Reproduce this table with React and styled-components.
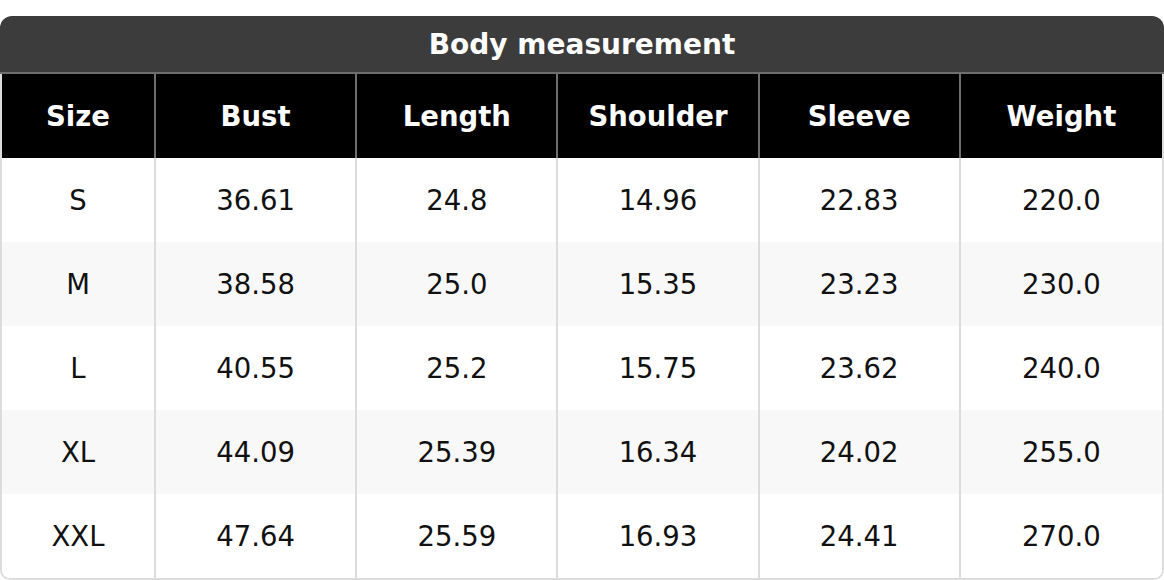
import React from 'react';
import styled, { createGlobalStyle } from 'styled-components';

const columns = ['Size', 'Bust', 'Length', 'Shoulder', 'Sleeve', 'Weight'];

const rows = [
  ['S', '36.61', '24.8', '14.96', '22.83', '220.0'],
  ['M', '38.58', '25.0', '15.35', '23.23', '230.0'],
  ['L', '40.55', '25.2', '15.75', '23.62', '240.0'],
  ['XL', '44.09', '25.39', '16.34', '24.02', '255.0'],
  ['XXL', '47.64', '25.59', '16.93', '24.41', '270.0'],
];

const App = () => (
  <>
    <GlobalStyle />
    <Page>
      <Title>Body measurement</Title>
      <Grid>
        {columns.map((col, i) => (
          <HeadCell key={col} last={i === columns.length - 1}>
            {col}
          </HeadCell>
        ))}
        {rows.map((row, r) =>
          row.map((value, c) => (
            <Cell
              key={`${r}-${c}`}
              striped={r % 2 === 1}
              last={c === row.length - 1}
            >
              {value}
            </Cell>
          ))
        )}
      </Grid>
    </Page>
  </>
);

export default App;

const GlobalStyle = createGlobalStyle`
  html, body {
    margin: 0;
    padding: 0;
    background: #fff;
    font-family: 'DejaVu Sans', 'Liberation Sans', sans-serif;
  }
`;

const Page = styled.div`
  width: 1164px;
  padding-top: 16px;
  box-sizing: border-box;
`;

const Title = styled.div`
  height: 56px;
  display: flex;
  align-items: center;
  justify-content: center;
  background-color: #3c3c3c;
  border-radius: 12px 12px 0 0;
  border-bottom: 2px solid #6e6e6e;
  color: #fff;
  font-size: 28px;
  font-weight: 700;
`;

const Grid = styled.div`
  display: grid;
  grid-template-columns: 154px repeat(5, 1fr);
  grid-auto-rows: 84px;
  border: 2px solid #dcdcdc;
  border-top: none;
  border-radius: 0 0 10px 10px;
  overflow: hidden;
`;

const HeadCell = styled.div`
  display: flex;
  align-items: center;
  justify-content: center;
  background-color: #000;
  color: #fff;
  font-size: 27.5px;
  font-weight: 700;
  border-right: ${props => (props.last ? 'none' : '2px solid #6e6e6e')};
`;

const Cell = styled.div`
  display: flex;
  align-items: center;
  justify-content: center;
  background-color: ${props => (props.striped ? '#f8f8f8' : '#fff')};
  color: #111;
  font-size: 27.5px;
  border-right: ${props => (props.last ? 'none' : '2px solid #dcdcdc')};
`;
